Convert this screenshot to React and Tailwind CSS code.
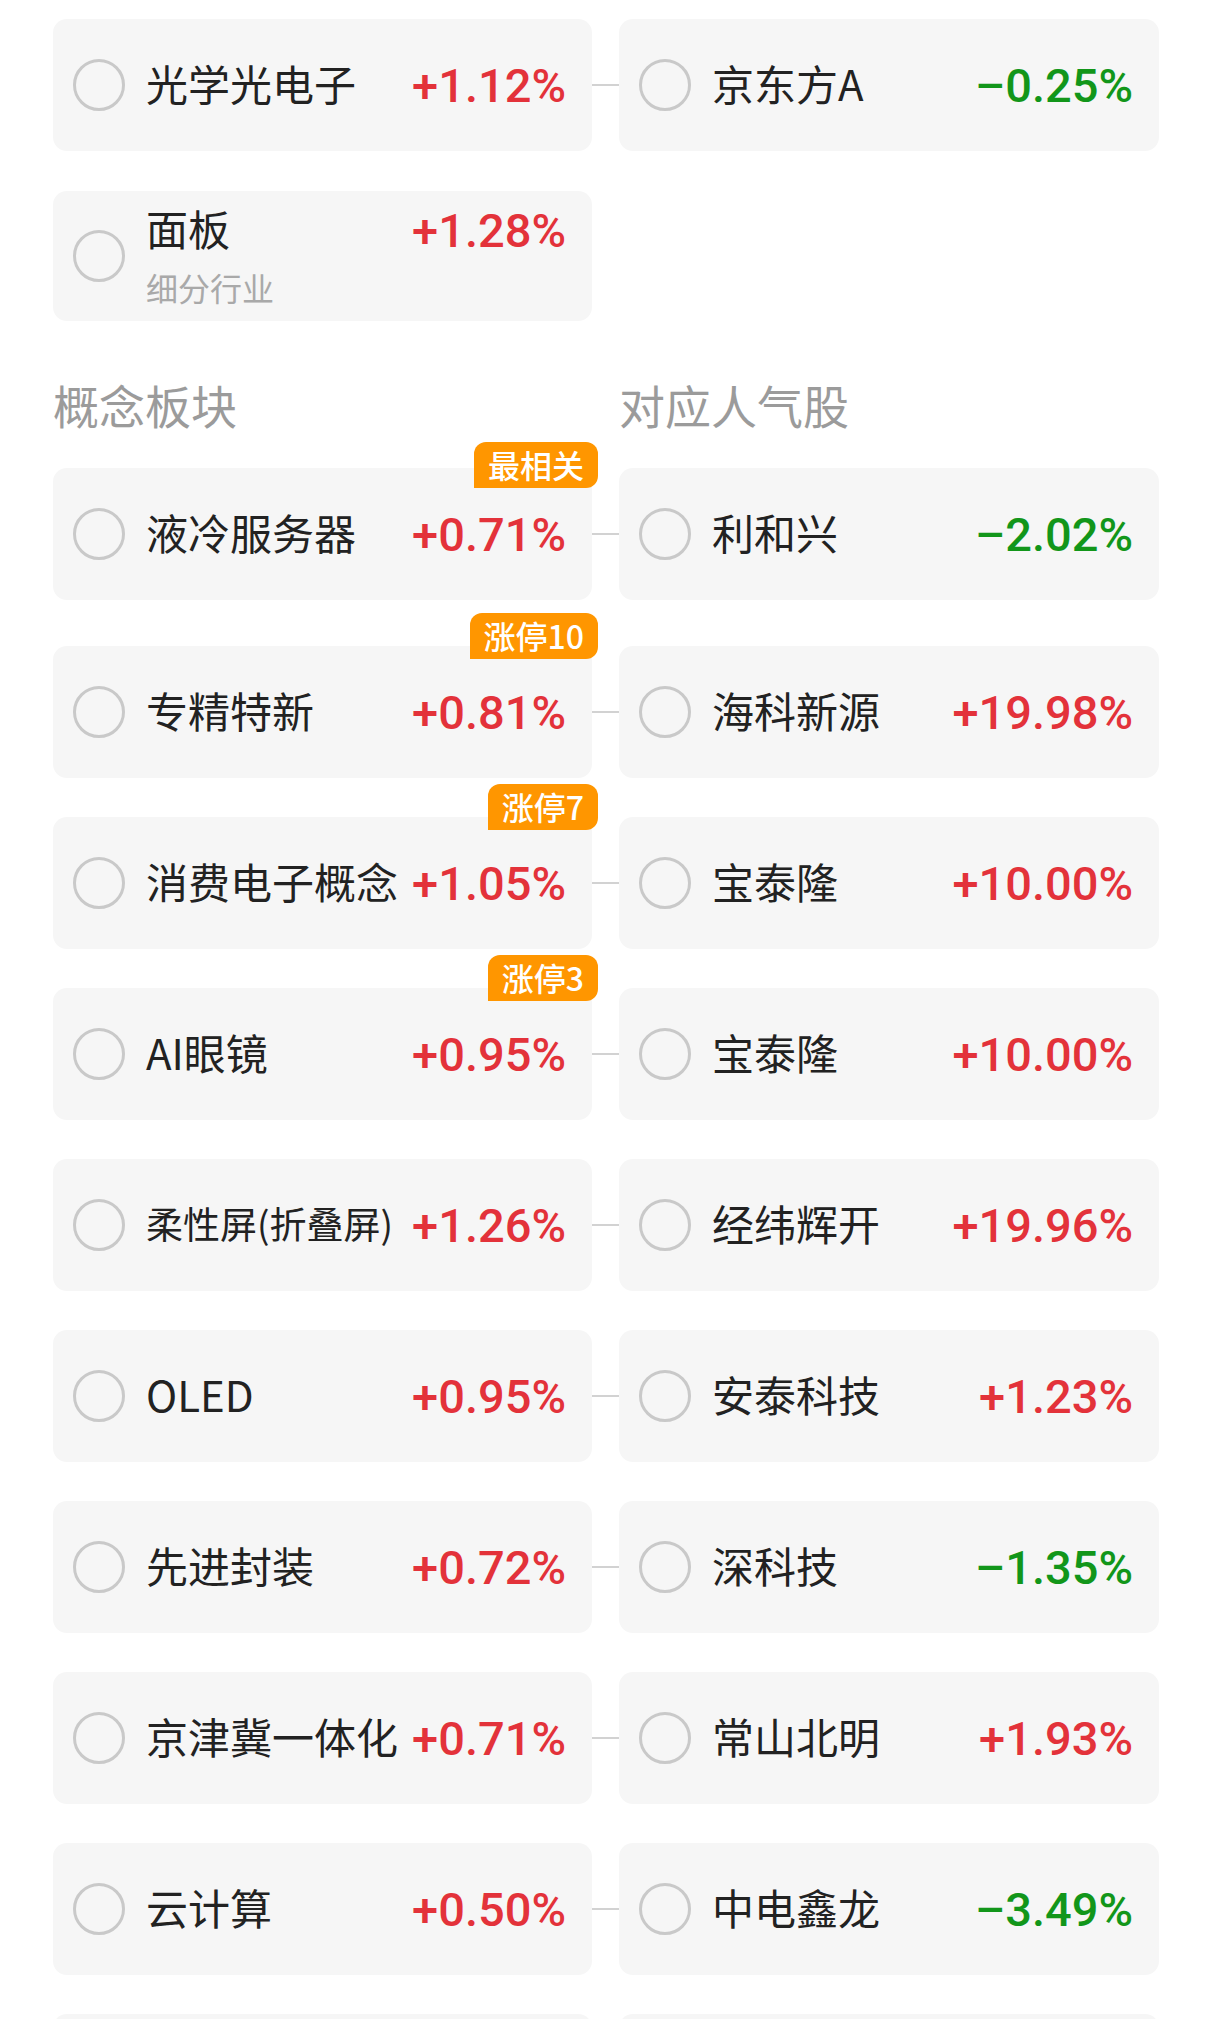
import React from "react";

const CJK = "font-['Noto_Sans_CJK_SC','Noto_Sans',sans-serif]";
const NUM = "font-['Roboto','Noto_Sans_CJK_SC',sans-serif]";

function Pct({ value }) {
  const up = value.startsWith("+");
  return (
    <span
      className={`${NUM} font-medium text-[47px] leading-none whitespace-nowrap ${
        up ? "text-[#e3323a]" : "text-[#12961a]"
      }`}
    >
      {value}
    </span>
  );
}

function Circle() {
  return (
    <span className="block w-[52px] h-[52px] shrink-0 rounded-full border-[3px] border-[#c9c9c9]" />
  );
}

function Badge({ text, top }) {
  return (
    <div
      className={`absolute right-[-6px] ${top} h-[46px] px-[14px] pb-[2px] flex items-center bg-[#ff9600] text-white ${CJK} text-[32px] font-medium leading-none rounded-tl-[12px] rounded-tr-[12px] rounded-br-[12px] whitespace-nowrap`}
    >
      {text}
    </div>
  );
}

function Card({ name, pct, badge, badgeTop = "top-[-33px]", small }) {
  return (
    <div className="relative h-full bg-[#f6f6f6] rounded-[14px] flex items-center pl-[20px] pr-[26px]">
      <Circle />
      <span
        className={`ml-[21px] pb-[4px] ${CJK} leading-none text-[#222222] whitespace-nowrap ${
          small ? "text-[37px]" : "text-[42px]"
        }`}
      >
        {name}
      </span>
      <span className="flex-1 min-w-[10px]" />
      <Pct value={pct} />
      {badge && <Badge text={badge} top={badgeTop} />}
    </div>
  );
}

function Connector() {
  return (
    <div className="flex items-center">
      <div className="w-full h-[2px] bg-[#d2d2d2]" />
    </div>
  );
}

function Row({ left, right, className = "" }) {
  return (
    <div className={`grid grid-cols-[539px_27px_540px] h-[132px] ${className}`}>
      <Card {...left} />
      {right ? <Connector /> : <div />}
      {right ? <Card {...right} /> : <div />}
    </div>
  );
}

const concept = [
  {
    left: { name: "液冷服务器", pct: "+0.71%", badge: "最相关", badgeTop: "top-[-26px]" },
    right: { name: "利和兴", pct: "–2.02%" },
  },
  {
    left: { name: "专精特新", pct: "+0.81%", badge: "涨停10" },
    right: { name: "海科新源", pct: "+19.98%" },
  },
  {
    left: { name: "消费电子概念", pct: "+1.05%", badge: "涨停7" },
    right: { name: "宝泰隆", pct: "+10.00%" },
  },
  {
    left: { name: "AI眼镜", pct: "+0.95%", badge: "涨停3" },
    right: { name: "宝泰隆", pct: "+10.00%" },
  },
  {
    left: { name: "柔性屏(折叠屏)", pct: "+1.26%", small: true },
    right: { name: "经纬辉开", pct: "+19.96%" },
  },
  {
    left: { name: "OLED", pct: "+0.95%" },
    right: { name: "安泰科技", pct: "+1.23%" },
  },
  {
    left: { name: "先进封装", pct: "+0.72%" },
    right: { name: "深科技", pct: "–1.35%" },
  },
  {
    left: { name: "京津冀一体化", pct: "+0.71%" },
    right: { name: "常山北明", pct: "+1.93%" },
  },
  {
    left: { name: "云计算", pct: "+0.50%" },
    right: { name: "中电鑫龙", pct: "–3.49%" },
  },
];

export default function App() {
  return (
    <div className="w-[1212px] min-h-[2019px] bg-white px-[53px] pt-[19px] overflow-hidden">
      <Row
        left={{ name: "光学光电子", pct: "+1.12%" }}
        right={{ name: "京东方A", pct: "–0.25%" }}
      />

      {/* 面板 */}
      <div className="grid grid-cols-[539px_27px_540px] h-[130px] mt-[40px]">
        <div className="h-full bg-[#f6f6f6] rounded-[14px] flex items-center pl-[20px] pr-[26px]">
          <Circle />
          <div className="ml-[21px] flex-1 self-stretch pt-[14px] flex flex-col">
            <div className="h-[50px] flex items-center justify-between">
              <span className={`${CJK} text-[42px] leading-none text-[#222222] pb-[4px]`}>面板</span>
              <Pct value="+1.28%" />
            </div>
            <div className={`mt-[15px] h-[36px] flex items-center ${CJK} text-[32px] leading-none text-[#a9a9a9] pb-[2px]`}>
              细分行业
            </div>
          </div>
        </div>
        <div />
        <div />
      </div>

      {/* headers */}
      <div className={`grid grid-cols-[539px_27px_540px] h-[60px] mt-[53px] ${CJK} text-[46px] leading-[60px] text-[#9b9b9b]`}>
        <div>概念板块</div>
        <div />
        <div>对应人气股</div>
      </div>

      <div className="mt-[34px] flex flex-col">
        {concept.map((r, i) => (
          <Row
            key={i}
            left={r.left}
            right={r.right}
            className={i === 0 ? "" : i === 1 ? "mt-[46px]" : "mt-[39px]"}
          />
        ))}
        <div className="grid grid-cols-[539px_27px_540px] h-[132px] mt-[39px]">
          <div className="bg-[#f6f6f6] rounded-[14px]" />
          <div />
          <div className="bg-[#f6f6f6] rounded-[14px]" />
        </div>
      </div>
    </div>
  );
}
